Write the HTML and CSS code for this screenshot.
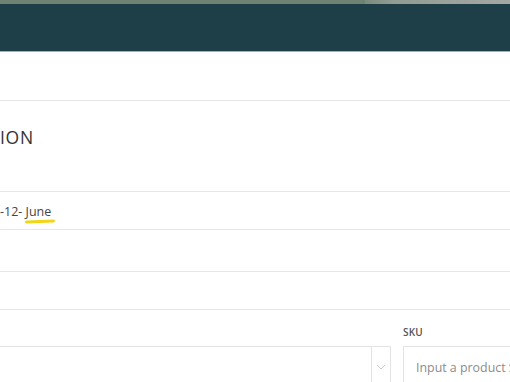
FILE: index.html
```html
<!DOCTYPE html>
<html lang="en">
<head>
<meta charset="utf-8">
<link rel="stylesheet" href="styles.css">
</head>
<body>
<div class="topstrip"><span class="ghost"></span></div>
<header class="navbar"></header>
<div class="tabs"></div>
<section class="heading-row">
  <h1 class="title">ION</h1>
</section>
<div class="row date-row">
  <span class="date">-12- <span class="hl">June</span></span>
</div>
<div class="row empty"></div>
<div class="row empty"></div>
<div class="form">
  <div class="field select-field">
    <label class="label">&nbsp;</label>
    <div class="select">
      <span class="arrow">
        <svg width="10" height="6" viewBox="0 0 10 6"><path d="M1 1l4 4 4-4" fill="none" stroke="#c8c8c8" stroke-width="1"/></svg>
      </span>
    </div>
  </div>
  <div class="field sku-field">
    <label class="label">SKU</label>
    <div class="input">Input a product S</div>
  </div>
</div>
</body>
</html>
```
FILE: styles.css
```css
html, body {
  margin: 0;
  padding: 0;
  background: #fff;
  overflow: hidden;
  width: 510px;
  height: 382px;
  font-family: "Open Sans", "Noto Sans", sans-serif;
  color: #333;
}
.topstrip {
  height: 4px;
  background: #6f8373;
  display: flex;
  justify-content: flex-end;
}
.ghost {
  width: 145px;
  height: 4px;
  background: linear-gradient(90deg, #7d8e80 0%, #9aa39b 20%, #a6aaa5 60%, #b0b2ae 100%);
  opacity: 0.8;
}
.navbar {
  height: 47px;
  background: #1e3e48;
  border-bottom: 1px solid #9cb1b9;
}
.tabs {
  height: 48px;
  border-bottom: 1px solid #e6e6e6;
}
.heading-row {
  height: 91px;
  border-bottom: 1px solid #e6e6e6;
  box-sizing: border-box;
  padding-top: 24px;
}
.title {
  margin: 0;
  font-size: 17.5px;
  line-height: 24px;
  font-weight: 400;
  letter-spacing: 0.7px;
  color: #333;
}
.row {
  border-bottom: 1px solid #e6e6e6;
}
.date-row {
  height: 37px;
  display: flex;
  align-items: center;
}
.date {
  font-size: 12.5px;
  color: #444;
  padding-top: 2px;
  white-space: nowrap;
}
.hl {
  position: relative;
}
.hl::after {
  content: "";
  position: absolute;
  left: -1px;
  right: -3px;
  bottom: -3px;
  height: 3px;
  border-radius: 2px;
  background: #f0d616;
  transform: rotate(-2.5deg);
}
.row.empty {
  height: 41px;
}
.row.empty + .row.empty {
  height: 37px;
}
.form {
  display: flex;
  gap: 12px;
  padding-top: 16px;
}
.field {
  display: flex;
  flex-direction: column;
  gap: 7px;
}
.label {
  font-size: 10px;
  font-weight: 600;
  color: #555;
  height: 13px;
  line-height: 13px;
  letter-spacing: 0.2px;
}
.select-field {
  width: 391px;
  flex-shrink: 0;
}
.select {
  height: 40px;
  border: 1px solid #e3e3e3;
  border-left: none;
  display: flex;
  justify-content: flex-end;
}
.arrow {
  width: 18px;
  border-left: 1px solid #e3e3e3;
  display: flex;
  align-items: center;
  justify-content: center;
}
.sku-field {
  flex: 1;
  min-width: 0;
}
.input {
  height: 40px;
  border: 1px solid #e3e3e3;
  border-right: none;
  padding-left: 12px;
  display: flex;
  align-items: center;
  font-size: 12.4px;
  color: #8c8c8c;
  white-space: nowrap;
}
```
